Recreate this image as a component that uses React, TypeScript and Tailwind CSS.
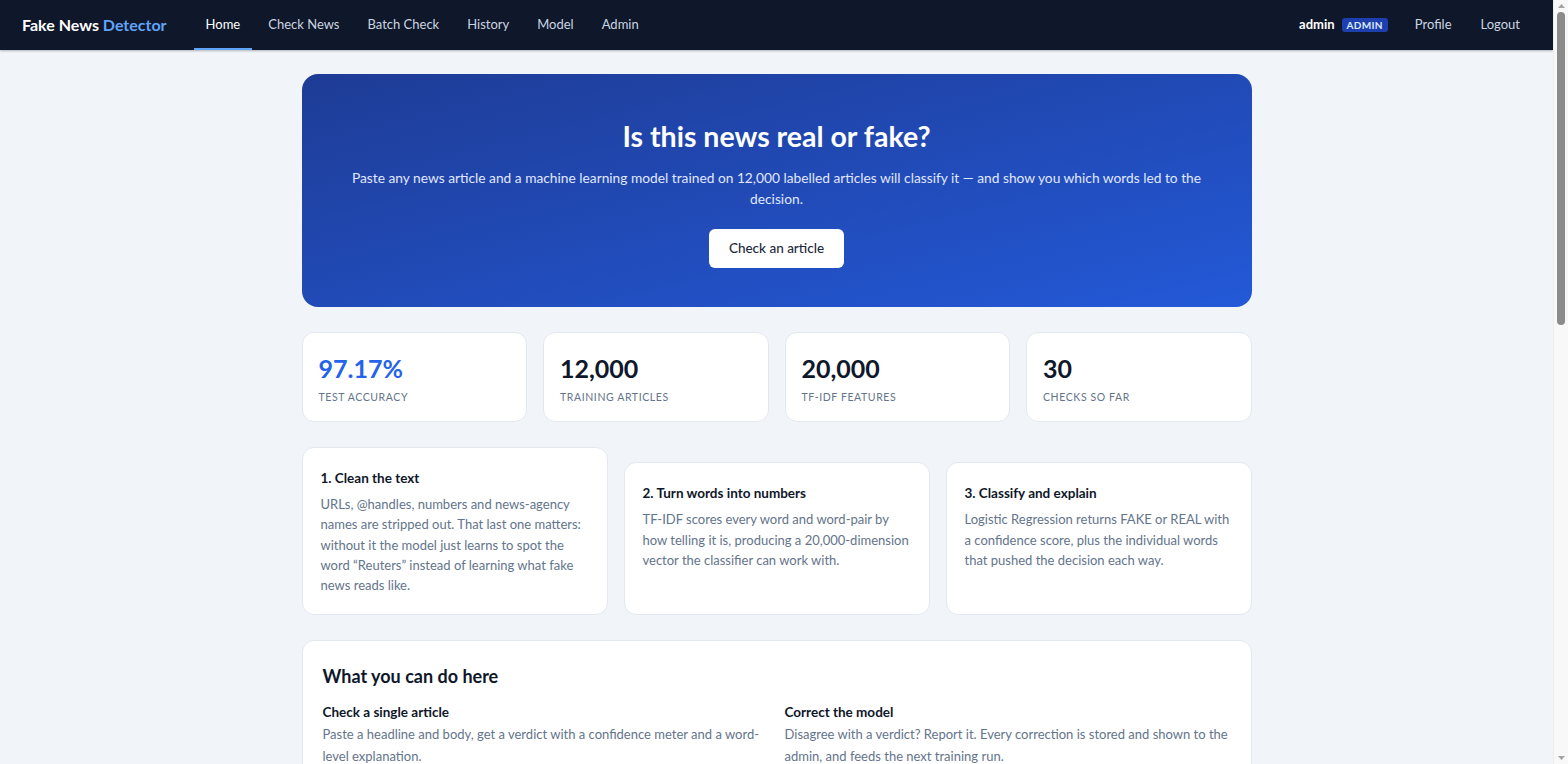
import { useState } from 'react';

const navLinks = ['Home', 'Check News', 'Batch Check', 'History', 'Model', 'Admin'];

const stats = [
  { value: '97.17%', label: 'Test accuracy', accent: true },
  { value: '12,000', label: 'Training articles' },
  { value: '20,000', label: 'TF-IDF features' },
  { value: '30', label: 'Checks so far' },
];

const steps = [
  {
    title: '1. Clean the text',
    body: 'URLs, @handles, numbers and news-agency names are stripped out. That last one matters: without it the model just learns to spot the word \u201CReuters\u201D instead of learning what fake news reads like.',
  },
  {
    title: '2. Turn words into numbers',
    body: 'TF-IDF scores every word and word-pair by how telling it is, producing a 20,000-dimension vector the classifier can work with.',
  },
  {
    title: '3. Classify and explain',
    body: 'Logistic Regression returns FAKE or REAL with a confidence score, plus the individual words that pushed the decision each way.',
  },
];

const features = [
  {
    title: 'Check a single article',
    body: 'Paste a headline and body, get a verdict with a confidence meter and a word-level explanation.',
  },
  {
    title: 'Correct the model',
    body: 'Disagree with a verdict? Report it. Every correction is stored and shown to the admin, and feeds the next training run.',
  },
  {
    title: 'Batch check',
    body: 'Upload a CSV of articles and get a verdict for every row, ready to download as a report.',
  },
  {
    title: 'Look back at your history',
    body: 'Every check you run is saved, so you can search past verdicts and see how the model scored them.',
  },
];

const Navbar = () => {
  const [active, setActive] = useState('Home');
  return (
    <header className="h-[50px] shrink-0 bg-[#0f172a] flex items-center justify-between pl-[22px] pr-[21px] shadow-[0_1px_2px_rgba(15,23,42,0.3)]">
      <div className="flex items-center h-full">
        <span className="text-[16px] font-bold text-white mr-[27px]">
          Fake News <span className="text-[#60a5fa]">Detector</span>
        </span>
        <nav className="flex items-center h-full gap-1">
          {navLinks.map((link) => (
            <button
              key={link}
              onClick={() => setActive(link)}
              className={`h-full px-3 text-[13px] border-b-2 pt-[1px] ${active === link ? 'text-white border-[#60a5fa]' : 'text-[#cbd5e1] border-transparent hover:text-white'}`}
            >
              {link}
            </button>
          ))}
        </nav>
      </div>
      <div className="flex items-center gap-[5px]">
        <span className="text-[13px] font-bold text-white">admin</span>
        <span className="ml-[2px] mr-[10px] bg-[#1e40af] text-[#dbeafe] text-[10px] leading-[14px] font-bold tracking-[0.3px] px-[5px] rounded-[3px]">
          ADMIN
        </span>
        <button className="px-3 text-[13px] text-[#cbd5e1] hover:text-white">Profile</button>
        <button className="px-3 text-[13px] text-[#cbd5e1] hover:text-white">Logout</button>
      </div>
    </header>
  );
};

// window scrollbar strip on the right edge
const ScrollTrack = () => (
  <div className="w-[15px] h-[764px] shrink-0 bg-[#f8f8f8] border-l border-[#ececec] flex flex-col items-center py-[3px]">
    <svg width="9" height="6" viewBox="0 0 9 6" className="shrink-0">
      <path d="M4.5 1 L8 5 L1 5 Z" fill="#a3a3a3" />
    </svg>
    <div className="mt-[3px] w-[8px] h-[313px] rounded-full bg-[#8b8b8b]" />
    <div className="flex-1" />
    <svg width="9" height="6" viewBox="0 0 9 6" className="shrink-0">
      <path d="M1 1 L8 1 L4.5 5 Z" fill="#a3a3a3" />
    </svg>
  </div>
);

export default function App() {
  return (
    <div className="flex items-start bg-[#f1f5f9] text-[#0f172a] font-[Lato,sans-serif]">
      <div className="flex-1 min-w-0 flex flex-col">
        <Navbar />

        <main className="w-[950px] mx-auto pt-6 pb-12 flex flex-col gap-[25px]">
          <section className="rounded-2xl bg-linear-to-br from-[#1e3c96] to-[#2359d8] px-12 pt-[44px] pb-[39px] text-center text-white">
            <h1 className="text-[28.5px] font-bold leading-[36px]">Is this news real or fake?</h1>
            <p className="mt-[13px] text-[13.75px] leading-[21px] text-[#e0e7ff]">
              Paste any news article and a machine learning model trained on 12,000 labelled articles will classify it — and show you which words led to the decision.
            </p>
            <button className="mt-[20px] bg-white text-[#1e293b] text-[13.5px] font-medium px-5 h-[39px] whitespace-nowrap rounded-md hover:bg-slate-100">
              Check an article
            </button>
          </section>

          <section className="grid grid-cols-4 gap-4">
            {stats.map((s) => (
              <div key={s.label} className="bg-white rounded-xl border border-[#e2e8f0] h-[90px] px-4 pt-[19px]">
                <div className={`text-[25px] font-bold leading-[32px] ${s.accent ? 'text-[#2563eb]' : 'text-[#0f172a]'}`}>{s.value}</div>
                <div className="mt-[5px] text-[10.5px] leading-[16px] uppercase tracking-[0.6px] text-[#64748b]">{s.label}</div>
              </div>
            ))}
          </section>

          <section className="grid grid-cols-3 gap-4 items-end">
            {steps.map((step, i) => (
              <div
                key={step.title}
                className={`bg-white rounded-xl border border-[#e2e8f0] px-[18px] pt-[20px] ${i === 0 ? 'pb-[19px]' : 'h-[153px]'}`}
              >
                <h3 className="text-[13.5px] font-bold leading-[20px] text-[#0f172a]">{step.title}</h3>
                <p className="mt-[6px] text-[13px] leading-[20.25px] text-[#64748b]">{step.body}</p>
              </div>
            ))}
          </section>

          <section className="bg-white rounded-xl border border-[#e2e8f0] px-5 pt-[22px] pb-6">
            <h2 className="text-[18px] font-bold leading-[26px]">What you can do here</h2>
            <div className="mt-[13px] grid grid-cols-2 gap-x-4 gap-y-4">
              {features.map((f) => (
                <div key={f.title}>
                  <h4 className="text-[13.5px] font-bold leading-[20px]">{f.title}</h4>
                  <p className="mt-[2px] text-[13px] leading-[21.5px] text-[#64748b]">{f.body}</p>
                </div>
              ))}
            </div>
          </section>

          <footer className="text-center text-[12px] text-[#94a3b8]">Fake News Detector · Logistic Regression on TF-IDF features</footer>
        </main>
      </div>
      <ScrollTrack />
    </div>
  );
}
